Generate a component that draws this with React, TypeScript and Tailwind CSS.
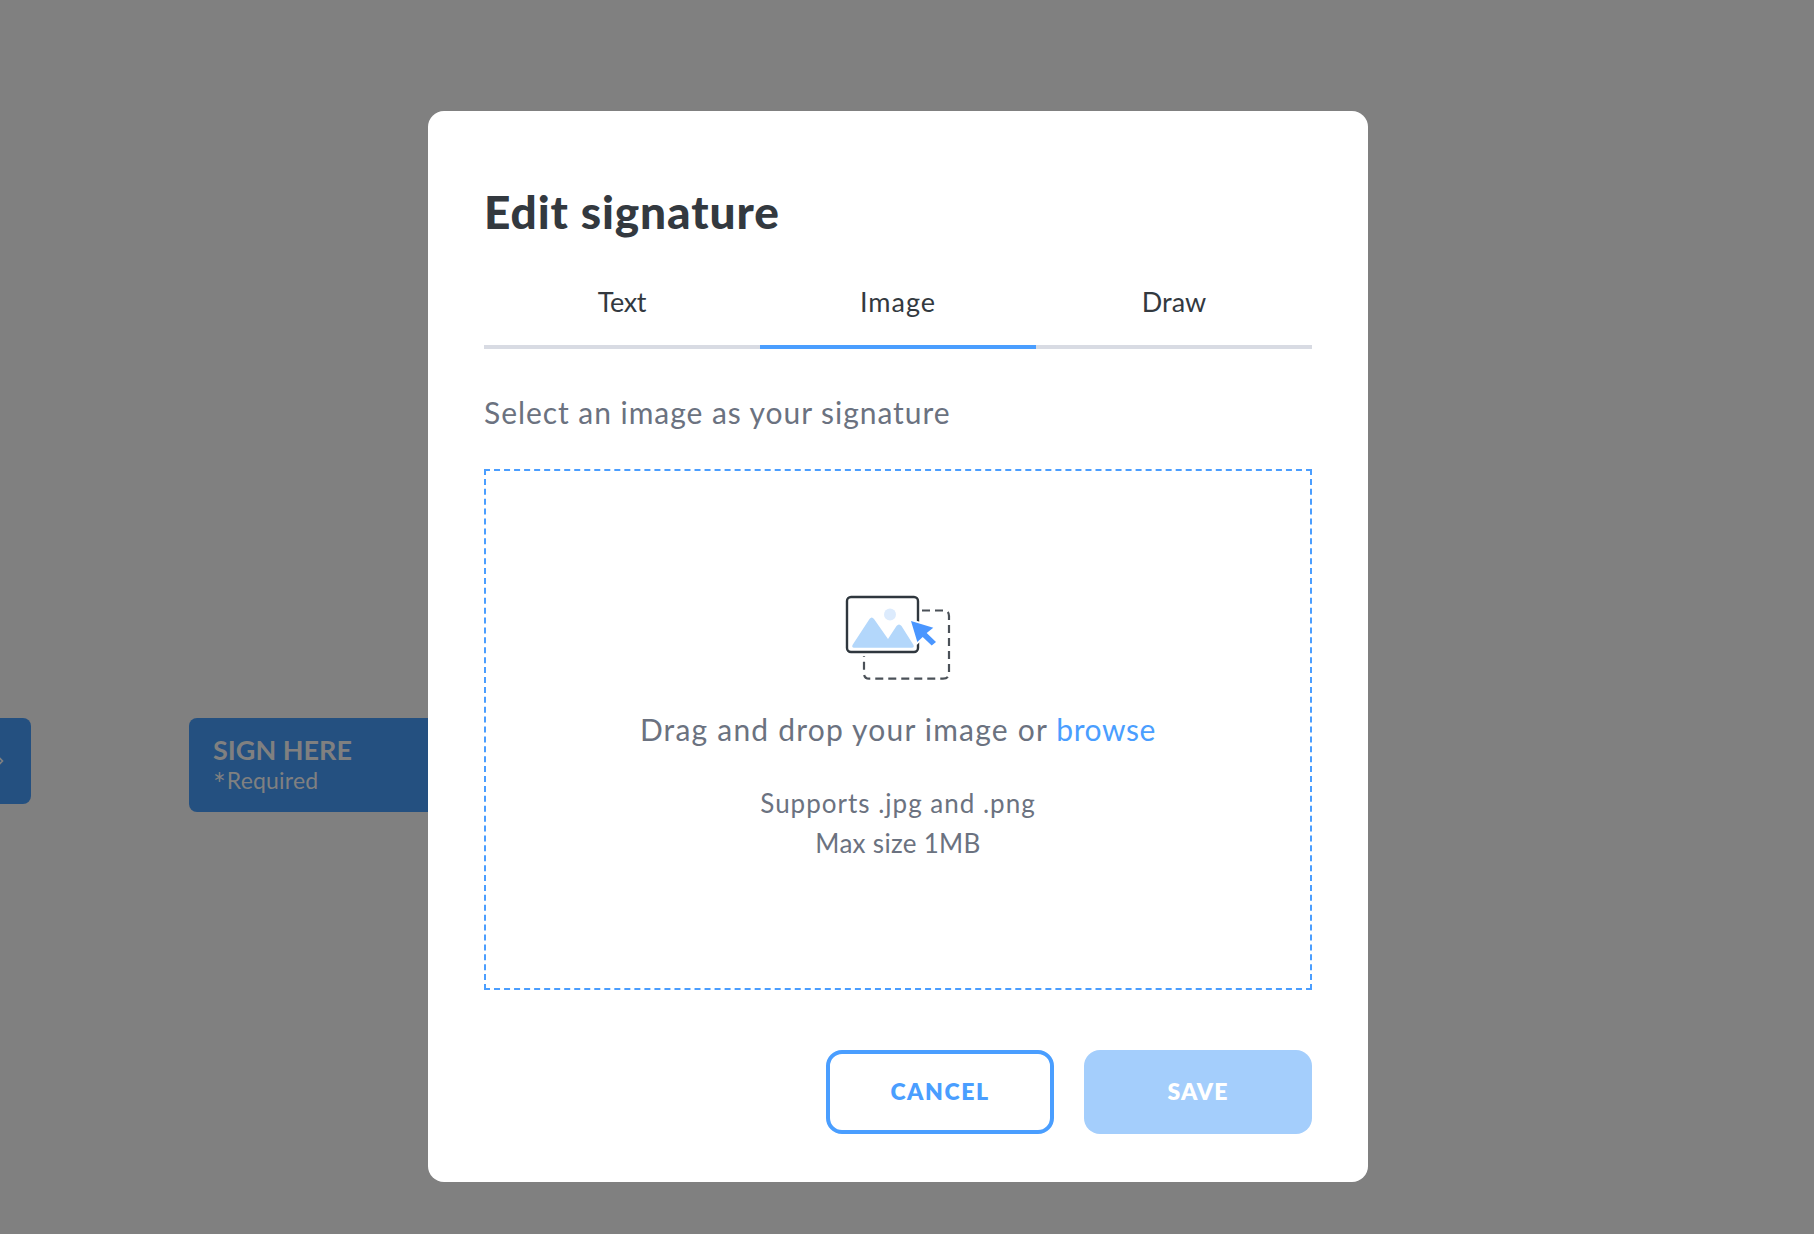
export default function App() {
  return (
    <div className="relative h-[1234px] w-full overflow-hidden bg-[#808080] font-['Lato','Liberation_Sans',sans-serif]">
      <div className="flex items-start gap-[158px] pt-[718px]">
        <div className="flex h-[86px] w-[31px] items-center rounded-r-[8px] bg-[#245080]">
          <svg className="ml-[-4px]" width="8" height="14" viewBox="0 0 8 14" fill="none" stroke="#808080" strokeWidth="1.6">
            <path d="M1 1.5 6.5 7 1 12.5" />
          </svg>
        </div>
        <div className="flex h-[94px] w-[300px] flex-col rounded-[8px] bg-[#245080] pl-[24px] pt-[15px] text-[#808080]">
          <div className="text-[27px] font-bold leading-[34px]">SIGN HERE</div>
          <div className="flex h-[28px] items-start">
            <span className="mt-[5px] text-[30px] leading-[23px]">*</span>
            <span className="ml-[1px] text-[23px] leading-[26px] tracking-[0.2px]">Required</span>
          </div>
        </div>
      </div>

      <div className="absolute inset-0 flex items-start pl-[428px] pt-[111px]">
        <div className="flex h-[1071px] w-[940px] flex-col rounded-[16px] bg-white px-[56px] pb-[48px] pt-[72px]">
          <h1 className="h-[58px] text-[46px] font-black leading-[58px] tracking-[0.9px] text-[#33393f]">Edit signature</h1>

          <div className="mt-[41px] grid grid-cols-3 text-center text-[27px] leading-[40px] text-[#33393f]">
            <div className="border-b-4 border-[#d8dbe3] pb-[23px] tracking-[-0.4px]">Text</div>
            <div className="border-b-4 border-[#4a9eff] pb-[23px] tracking-[1px]">Image</div>
            <div className="border-b-4 border-[#d8dbe3] pb-[23px]">Draw</div>
          </div>

          <p className="mt-[43px] text-[30px] leading-[40px] tracking-[0.95px] text-[#6b7280]">Select an image as your signature</p>

          <div className="mt-[37px] flex h-[521px] flex-col items-center justify-center border-2 border-dashed border-[#4a9eff] pb-[2px] text-center text-[#6b7280]">
            <svg width="107" height="86" viewBox="45 24 107 86" fill="none">
              <path d="M122 39.5H143Q149 39.5 149 45V102Q149 107.6 143 107.6H69Q64 107.6 64 102V85" stroke="#4b5158" strokeWidth="2.2" strokeDasharray="8 5" />
              <rect x="47" y="26" width="71" height="55" rx="4" fill="#fff" stroke="#2f373e" strokeWidth="2.4" />
              <circle cx="90" cy="43.5" r="6" fill="#dcebfd" />
              <path d="M52.5 74 69.5 48Q71.7 45 74 48L88 68 96.5 55Q99 52 101.5 55L113.5 74Q114.5 76.7 112 76.7H54Q51.5 76.7 52.5 74Z" fill="#b3d7fb" />
              <path d="M111 50 133.3 56.7 126.7 62 136 71 131.7 74.5 122.7 66 117.3 71Z" fill="#4a96ff" stroke="#fff" strokeWidth="3.5" paintOrder="stroke" />
            </svg>
            <p className="mt-[28px] text-[30px] leading-[40px] tracking-[1.2px]">
              Drag and drop your image or <span className="tracking-[0.6px] text-[#4a9eff]">browse</span>
            </p>
            <p className="mt-[34px] text-[26px] leading-[40px] tracking-[1px]">Supports .jpg and .png</p>
            <p className="text-[26px] leading-[40px] tracking-[0.3px]">Max size 1MB</p>
          </div>

          <div className="mt-[60px] flex justify-end gap-[30px]">
            <button className="h-[84px] w-[228px] rounded-[16px] border-4 border-[#4a9eff] bg-white pb-[2px] text-[23px] font-extrabold tracking-[1.6px] text-[#4a9eff]">CANCEL</button>
            <button className="h-[84px] w-[228px] rounded-[16px] bg-[#a4cefc] pb-[2px] text-[23px] font-extrabold tracking-[1px] text-white">SAVE</button>
          </div>
        </div>
      </div>
    </div>
  );
}
